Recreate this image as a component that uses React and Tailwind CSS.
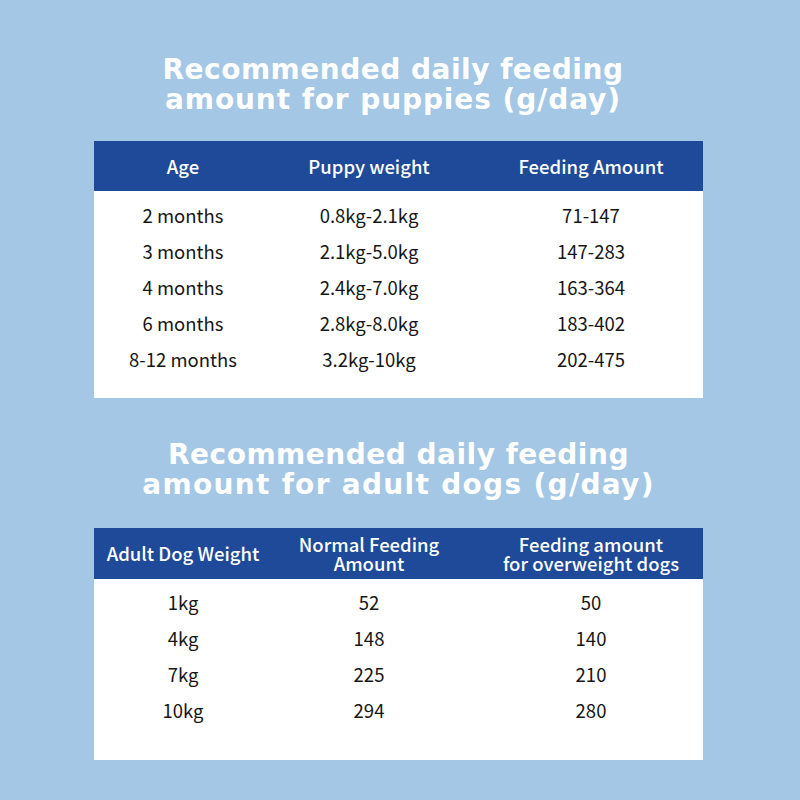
import React from 'react';

const puppyRows = [
  ['2 months', '0.8kg-2.1kg', '71-147'],
  ['3 months', '2.1kg-5.0kg', '147-283'],
  ['4 months', '2.4kg-7.0kg', '163-364'],
  ['6 months', '2.8kg-8.0kg', '183-402'],
  ['8-12 months', '3.2kg-10kg', '202-475'],
];

const adultRows = [
  ['1kg', '52', '50'],
  ['4kg', '148', '140'],
  ['7kg', '225', '210'],
  ['10kg', '294', '280'],
];

const cols = 'grid grid-cols-[178px_194px_237px] items-center text-center';

const Title = ({ lines, className }) => (
  <h2
    className={`text-white text-[28px] leading-[30px] font-bold text-center ${className}`}
    style={{ fontFamily: '"DejaVu Sans", sans-serif' }}
  >
    {lines.map((l, i) => (
      <div key={i} className={l.cls}>{l.text}</div>
    ))}
  </h2>
);

const Table = ({ head, rows, headHeight, bodyPad, className }) => (
  <div className={`w-[609px] bg-white ${className}`}>
    <div className={`${cols} bg-[#1e4a99] text-white text-[18.5px] leading-[19px] font-medium ${headHeight}`}>
      {head.map((h, i) => (
        <div key={i} className={i === 2 ? 'pl-[13px]' : ''}>
          {h}
        </div>
      ))}
    </div>
    <div className={bodyPad}>
      {rows.map((r, i) => (
        <div key={i} className={`${cols} h-[36px] text-[18.5px] text-[#161616]`}>
          {r.map((c, j) => (
            <div key={j} className={j === 2 ? 'pl-[13px]' : ''}>
              {c}
            </div>
          ))}
        </div>
      ))}
    </div>
  </div>
);

export default function App() {
  return (
    <div
      className="w-[800px] h-[800px] bg-[#a3c7e5] flex flex-col items-start pt-[55px]"
      style={{ fontFamily: '"Noto Sans CJK SC", "Noto Sans", sans-serif' }}
    >
      <Title
        className="w-[800px] pr-[14px]"
        lines={[
          { text: 'Recommended daily feeding', cls: 'tracking-[0.5px]' },
          { text: 'amount for puppies (g/day)', cls: 'tracking-[0.9px]' },
        ]}
      />
      <Table
        className="mt-[26px] ml-[94px]"
        head={['Age', 'Puppy weight', 'Feeding Amount']}
        rows={puppyRows}
        headHeight="h-[50px]"
        bodyPad="pt-[7px] pb-[20px]"
      />
      <Title
        className="mt-[42px] w-[800px] pr-[3px]"
        lines={[
          { text: 'Recommended daily feeding', cls: 'tracking-[0.5px]' },
          { text: 'amount for adult dogs (g/day)', cls: 'tracking-[1.3px]' },
        ]}
      />
      <Table
        className="mt-[28px] ml-[94px]"
        head={[
          'Adult Dog Weight',
          <>Normal Feeding<br />Amount</>,
          <>Feeding amount<br />for overweight dogs</>,
        ]}
        rows={adultRows}
        headHeight="h-[51px]"
        bodyPad="pt-[6px] pb-[31px]"
      />
    </div>
  );
}
